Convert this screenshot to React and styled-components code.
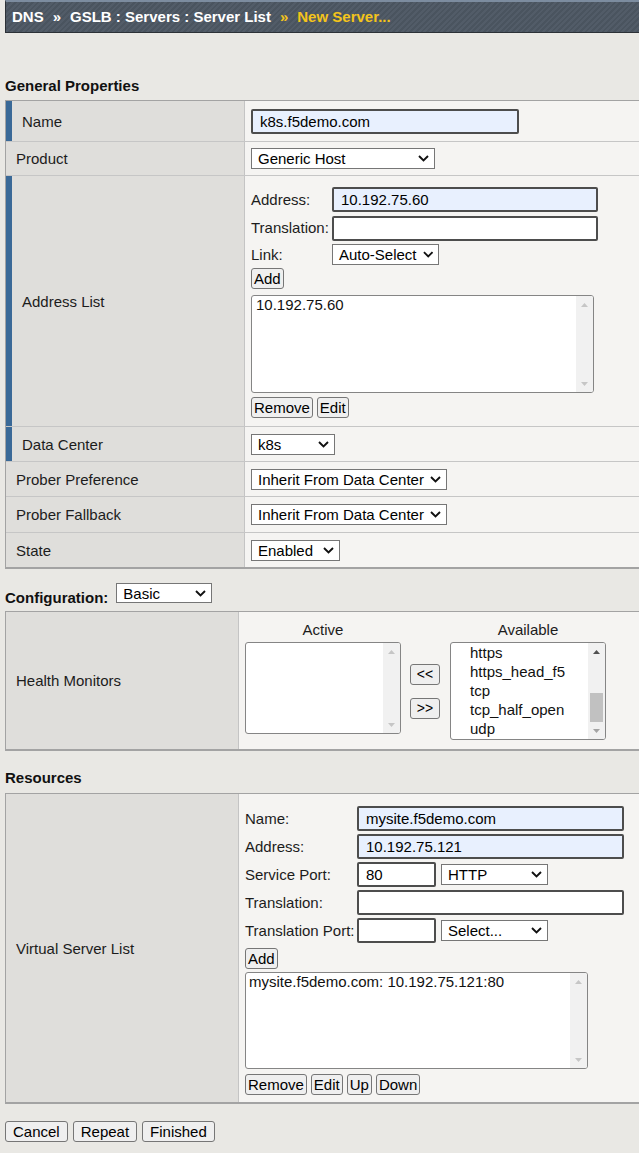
import React from 'react';
import styled, { createGlobalStyle } from 'styled-components';

const FONT = `"Liberation Sans", Arial, sans-serif`;

const GlobalStyle = createGlobalStyle`
  html, body { margin: 0; padding: 0; background: #e9e8e4; }
  body { font-family: ${FONT}; font-size: 15px; color: #1c1c1c; overflow: hidden; }
  * { box-sizing: border-box; }
`;

const Page = styled.div`
  width: 100%;
  min-height: 1153px;
`;

const Breadcrumb = styled.div`
  margin-left: 5px;
  height: 33px;
  border-top: 2px solid #7c8c9f;
  border-left: 1px solid #2c3137;
  border-bottom: 1px solid #2c3137;
  background: repeating-linear-gradient(135deg, #525c68 0 2px, #4a545f 2px 4px);
  padding-left: 6px;
  display: flex;
  align-items: center;
  font-weight: 700;
  font-size: 15px;
  line-height: 30px;
  color: #fff;
  white-space: nowrap;
`;

const Crumb = styled.span`
  color: ${(p) => (p.$current ? '#f4c41b' : '#ffffff')};
`;

const Sep = styled.span`
  padding: 0 9px;
  color: ${(p) => (p.$current ? '#f4c41b' : '#ffffff')};
`;

const Content = styled.div`
  padding-left: 5px;
`;

const SectionTitle = styled.div`
  font-weight: 700;
  font-size: 15px;
  line-height: 18px;
  color: #111;
  margin: ${(p) => p.$top}px 0 ${(p) => p.$bottom}px;
`;

const FormTable = styled.div`
  --label-w: ${(p) => p.$labelWidth}px;
  border-top: 1px solid #a3a3a3;
  border-left: 1px solid #a3a3a3;
  border-bottom: 2px solid #a3a3a3;
`;

const Row = styled.div`
  display: grid;
  grid-template-columns: var(--label-w) 1fr;
  min-height: ${(p) => p.$h || 0}px;
  border-bottom: 1px solid #c6c6c6;
  &:last-child {
    border-bottom: none;
  }
`;

const LabelCell = styled.div`
  display: flex;
  align-items: center;
  background: #dfdedb;
  border-right: 1px solid #c4c4c4;
  border-left: ${(p) => (p.$marked ? '6px solid #3a6997' : 'none')};
  padding-left: 10px;
  color: #1c1c1c;
  white-space: nowrap;
`;

const ValueCell = styled.div`
  display: flex;
  flex-direction: ${(p) => (p.$stack ? 'column' : 'row')};
  align-items: ${(p) => (p.$stack ? 'flex-start' : 'center')};
  background: #f5f4f2;
  padding: ${(p) => p.$pad || '0 6px'};
`;

const TextInput = styled.input`
  width: ${(p) => p.$w}px;
  height: 25px;
  border: 2px solid #4d4d4d;
  border-radius: 2px;
  padding: 0 7px;
  background: ${(p) => (p.$filled ? '#e8f0fe' : '#ffffff')};
  font: 15px ${FONT};
  color: #000;
  outline: none;
  flex-shrink: 0;
`;

const SelectBox = styled.div`
  display: inline-flex;
  align-items: center;
  justify-content: space-between;
  gap: 6px;
  width: ${(p) => p.$w}px;
  height: ${(p) => p.$h || 21}px;
  border: 1px solid #767676;
  background: #fff;
  padding: 0 5px 0 6px;
  font-size: 15px;
  color: #000;
  white-space: nowrap;
  flex-shrink: 0;
`;

const Btn = styled.button`
  height: 21px;
  min-width: ${(p) => p.$minW || 0}px;
  padding: 0 ${(p) => (p.$px == null ? 2 : p.$px)}px;
  border: 1px solid #767676;
  border-radius: 3px;
  background: #efefef;
  font: ${(p) => p.$fs || 15}px ${FONT};
  line-height: 19px;
  color: #000;
  cursor: pointer;
  flex-shrink: 0;
`;

const ButtonRow = styled.div`
  display: flex;
  gap: ${(p) => p.$gap || 4}px;
  margin-top: ${(p) => p.$mt || 0}px;
`;

const FieldGrid = styled.div`
  display: grid;
  grid-template-columns: ${(p) => p.$labelW}px auto;
  row-gap: ${(p) => p.$gap}px;
  align-items: center;
`;

const FieldLabel = styled.div`
  line-height: 18px;
  white-space: nowrap;
  color: #1c1c1c;
`;

const InlineGroup = styled.div`
  display: flex;
  align-items: center;
  gap: 5px;
`;

const Spaced = styled.div`
  margin-top: ${(p) => p.$mt || 0}px;
`;

const ConfigRow = styled.div`
  display: flex;
  align-items: flex-start;
  gap: 8px;
  margin: 14px 0 4px;
`;

const ConfigLabel = styled.div`
  font-weight: 700;
  line-height: 18px;
  padding-top: 6px;
  color: #111;
`;

/* list box */
const ListFrame = styled.div`
  display: flex;
  width: ${(p) => p.$w}px;
  height: ${(p) => p.$h}px;
  border: 1px solid #858585;
  border-radius: 3px;
  background: #fff;
  overflow: hidden;
  flex-shrink: 0;
`;

const ListBody = styled.div`
  flex: 1;
  padding-left: ${(p) => p.$indent}px;
  line-height: ${(p) => p.$lh}px;
  color: #111;
  white-space: nowrap;
  overflow: hidden;
`;

const ScrollTrack = styled.div`
  width: 17px;
  background: #f1f1f1;
  display: flex;
  flex-direction: column;
`;

const ScrollArrow = styled.div`
  height: 17px;
  display: flex;
  align-items: center;
  justify-content: center;
  flex-shrink: 0;
`;

const TrackSpace = styled.div`
  flex: 1;
`;

const ScrollThumb = styled.div`
  height: ${(p) => p.$h}px;
  margin: 0 2px;
  background: #c1c1c1;
`;

const Arrow = ({ up, color }) => (
  <svg width="7" height="4" viewBox="0 0 7 4">
    <path d={up ? 'M0 4L3.5 0L7 4Z' : 'M0 0L3.5 4L7 0Z'} fill={color} />
  </svg>
);

const Chevron = () => (
  <svg width="11" height="7" viewBox="0 0 11 7">
    <path d="M1 1l4.5 4.5L10 1" fill="none" stroke="#111" strokeWidth="1.9" />
  </svg>
);

function Select({ w, h, children }) {
  return (
    <SelectBox $w={w} $h={h}>
      <span>{children}</span>
      <Chevron />
    </SelectBox>
  );
}

function ListBox({ w, h, items = [], indent = 4, lh = 18, upColor = '#c6c6c6', downColor = '#c6c6c6', thumb }) {
  return (
    <ListFrame $w={w} $h={h}>
      <ListBody $indent={indent} $lh={lh}>
        {items.map((it) => (
          <div key={it}>{it}</div>
        ))}
      </ListBody>
      <ScrollTrack>
        <ScrollArrow>
          <Arrow up color={upColor} />
        </ScrollArrow>
        <TrackSpace />
        {thumb ? <ScrollThumb $h={thumb} /> : null}
        <ScrollArrow>
          <Arrow color={downColor} />
        </ScrollArrow>
      </ScrollTrack>
    </ListFrame>
  );
}

/* health monitor picker */
const MonitorPicker = styled.div`
  display: flex;
  align-items: flex-start;
`;

const MonitorColumn = styled.div`
  display: flex;
  flex-direction: column;
  width: 156px;
`;

const ColumnTitle = styled.div`
  text-align: center;
  line-height: 18px;
  margin-bottom: 3px;
  color: #1c1c1c;
`;

const MoveButtons = styled.div`
  display: flex;
  flex-direction: column;
  gap: 13px;
  padding-top: 43px;
  margin: 0 10px 0 9px;
`;

const Footer = styled.div`
  display: flex;
  gap: 5px;
  margin-top: 17px;
`;

export default function App() {
  return (
    <Page>
      <GlobalStyle />
      <Breadcrumb>
        <Crumb>DNS</Crumb>
        <Sep>»</Sep>
        <Crumb>GSLB : Servers : Server List</Crumb>
        <Sep $current>»</Sep>
        <Crumb $current>New Server...</Crumb>
      </Breadcrumb>

      <Content>
        <SectionTitle $top={44} $bottom={5}>General Properties</SectionTitle>
        <FormTable $labelWidth={239}>
          <Row $h={41}>
            <LabelCell $marked>Name</LabelCell>
            <ValueCell>
              <TextInput $w={268} $filled readOnly value="k8s.f5demo.com" />
            </ValueCell>
          </Row>
          <Row $h={34}>
            <LabelCell>Product</LabelCell>
            <ValueCell>
              <Select w={184}>Generic Host</Select>
            </ValueCell>
          </Row>
          <Row>
            <LabelCell $marked>Address List</LabelCell>
            <ValueCell $stack $pad="11px 6px 8px">
              <FieldGrid $labelW={81} $gap={3.5}>
                <FieldLabel>Address:</FieldLabel>
                <TextInput $w={266} $filled readOnly value="10.192.75.60" />
                <FieldLabel>Translation:</FieldLabel>
                <TextInput $w={266} readOnly value="" />
                <FieldLabel>Link:</FieldLabel>
                <Select w={107}>Auto-Select</Select>
              </FieldGrid>
              <Spaced $mt={3}>
                <Btn>Add</Btn>
              </Spaced>
              <Spaced $mt={6}>
                <ListBox w={343} h={98} items={['10.192.75.60']} indent={4} />
              </Spaced>
              <ButtonRow $mt={4}>
                <Btn>Remove</Btn>
                <Btn>Edit</Btn>
              </ButtonRow>
            </ValueCell>
          </Row>
          <Row $h={35}>
            <LabelCell $marked>Data Center</LabelCell>
            <ValueCell>
              <Select w={84}>k8s</Select>
            </ValueCell>
          </Row>
          <Row $h={35}>
            <LabelCell>Prober Preference</LabelCell>
            <ValueCell>
              <Select w={196}>Inherit From Data Center</Select>
            </ValueCell>
          </Row>
          <Row $h={36}>
            <LabelCell>Prober Fallback</LabelCell>
            <ValueCell>
              <Select w={196}>Inherit From Data Center</Select>
            </ValueCell>
          </Row>
          <Row $h={34}>
            <LabelCell>State</LabelCell>
            <ValueCell>
              <Select w={89}>Enabled</Select>
            </ValueCell>
          </Row>
        </FormTable>

        <ConfigRow>
          <ConfigLabel>Configuration:</ConfigLabel>
          <Select w={96} h={20}>Basic</Select>
        </ConfigRow>

        <FormTable $labelWidth={233}>
          <Row>
            <LabelCell>Health Monitors</LabelCell>
            <ValueCell $stack $pad="9px 6px 9px">
              <MonitorPicker>
                <MonitorColumn>
                  <ColumnTitle>Active</ColumnTitle>
                  <ListBox w={156} h={92} />
                </MonitorColumn>
                <MoveButtons>
                  <Btn $minW={30} $px={0} $fs={14}>&lt;&lt;</Btn>
                  <Btn $minW={30} $px={0} $fs={14}>&gt;&gt;</Btn>
                </MoveButtons>
                <MonitorColumn>
                  <ColumnTitle>Available</ColumnTitle>
                  <ListBox
                    w={156}
                    h={98}
                    indent={19}
                    lh={19}
                    items={['https', 'https_head_f5', 'tcp', 'tcp_half_open', 'udp']}
                    upColor="#505050"
                    downColor="#a3a3a3"
                    thumb={29}
                  />
                </MonitorColumn>
              </MonitorPicker>
            </ValueCell>
          </Row>
        </FormTable>

        <SectionTitle $top={18} $bottom={6}>Resources</SectionTitle>
        <FormTable $labelWidth={233}>
          <Row>
            <LabelCell>Virtual Server List</LabelCell>
            <ValueCell $stack $pad="12px 6px 7px">
              <FieldGrid $labelW={112} $gap={3}>
                <FieldLabel>Name:</FieldLabel>
                <TextInput $w={267} $filled readOnly value="mysite.f5demo.com" />
                <FieldLabel>Address:</FieldLabel>
                <TextInput $w={267} $filled readOnly value="10.192.75.121" />
                <FieldLabel>Service Port:</FieldLabel>
                <InlineGroup>
                  <TextInput $w={79} readOnly value="80" />
                  <Select w={107}>HTTP</Select>
                </InlineGroup>
                <FieldLabel>Translation:</FieldLabel>
                <TextInput $w={267} readOnly value="" />
                <FieldLabel>Translation Port:</FieldLabel>
                <InlineGroup>
                  <TextInput $w={79} readOnly value="" />
                  <Select w={107}>Select...</Select>
                </InlineGroup>
              </FieldGrid>
              <Spaced $mt={5}>
                <Btn>Add</Btn>
              </Spaced>
              <Spaced $mt={3}>
                <ListBox w={343} h={97} items={['mysite.f5demo.com: 10.192.75.121:80']} indent={3} />
              </Spaced>
              <ButtonRow $mt={5} $gap={4}>
                <Btn>Remove</Btn>
                <Btn>Edit</Btn>
                <Btn>Up</Btn>
                <Btn>Down</Btn>
              </ButtonRow>
            </ValueCell>
          </Row>
        </FormTable>

        <Footer>
          <Btn $px={7}>Cancel</Btn>
          <Btn $px={7}>Repeat</Btn>
          <Btn $px={7}>Finished</Btn>
        </Footer>
      </Content>
    </Page>
  );
}
